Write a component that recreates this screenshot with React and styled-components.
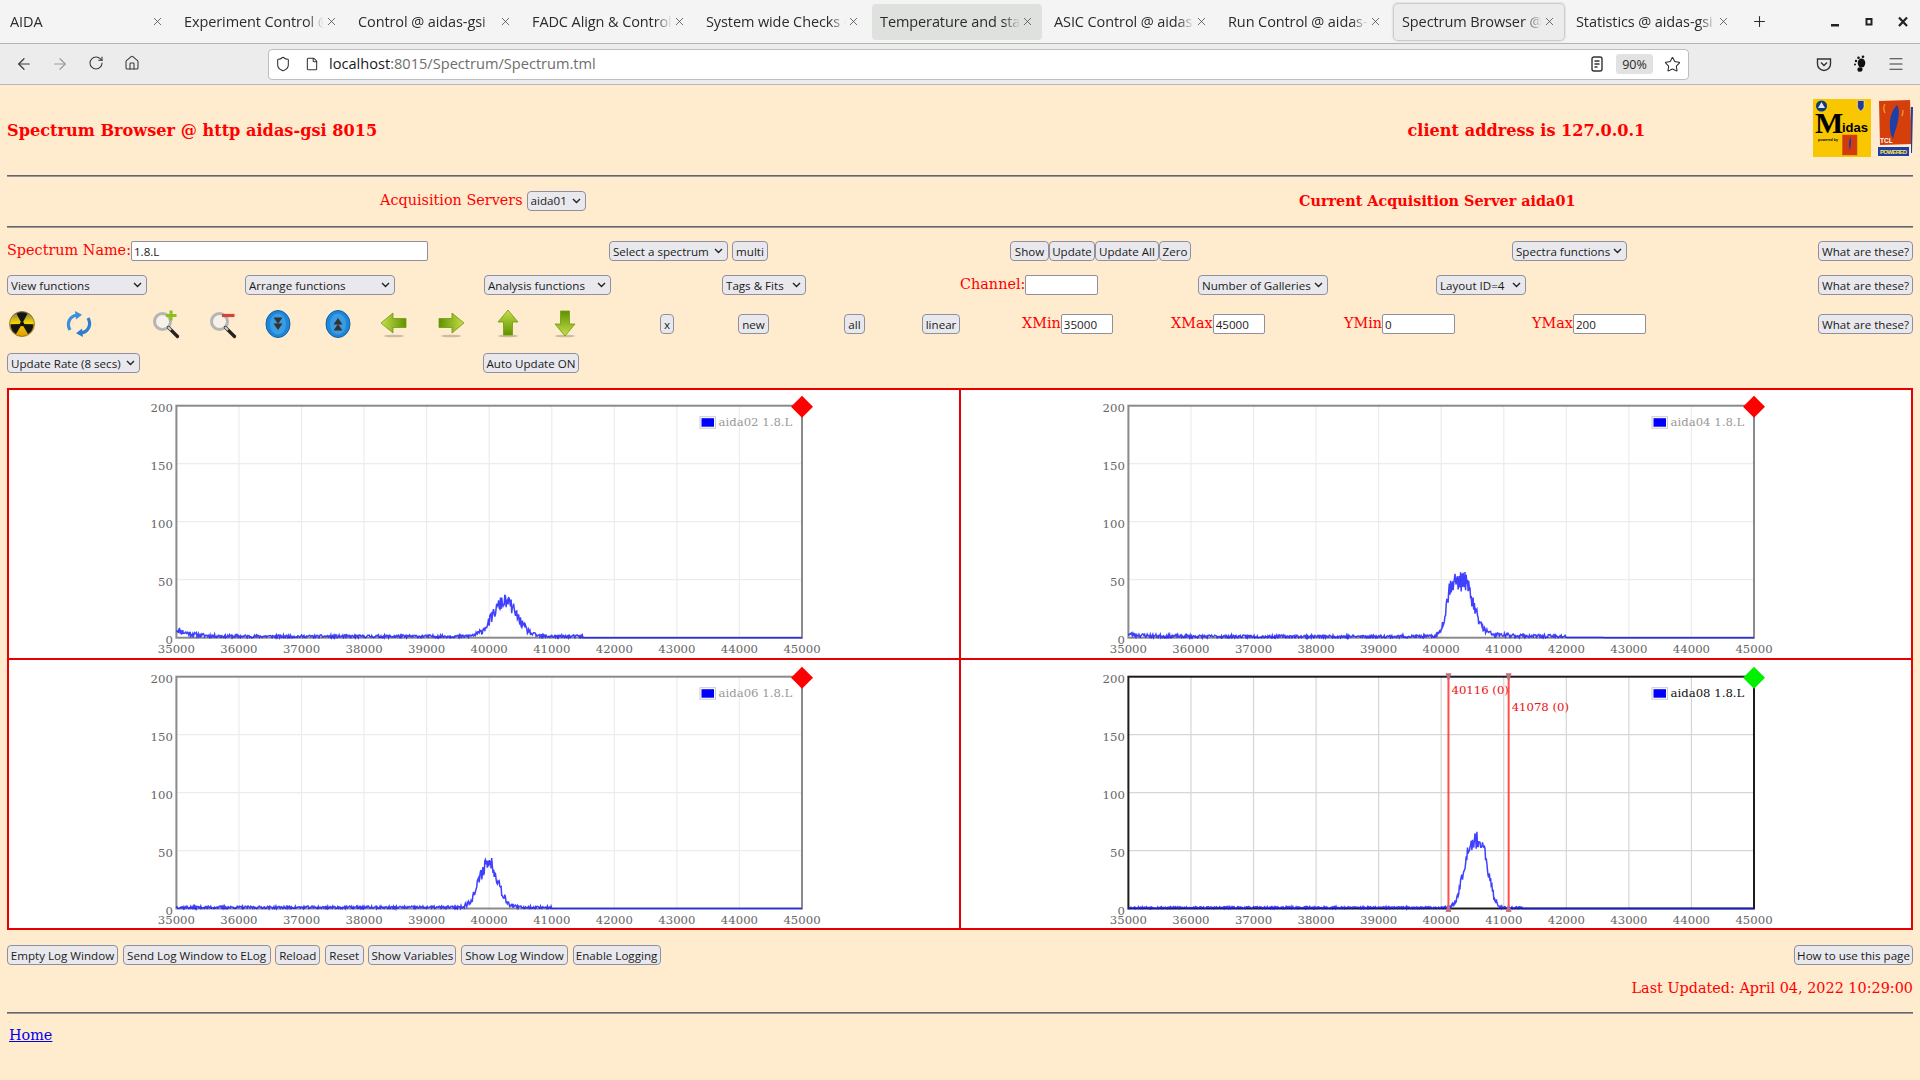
import React from 'react';
import styled, { createGlobalStyle } from 'styled-components';
import { X, ArrowLeft, ArrowRight, RotateCw, Home as HomeIcon, Plus, Star, Menu, Shield, File } from 'lucide-react';

const UI = '"Open Sans", "Noto Sans", sans-serif';
const SERIF = '"DejaVu Serif", serif';

const Global = createGlobalStyle`
  html, body { margin: 0; padding: 0; background: #ffebcd; }
  body { font-family: ${SERIF}; overflow: hidden; }
`;

const Chrome = styled.div`height: 85px; background: #ececec; font-family: ${UI}; color: #2b2b2b;`;
const TabBar = styled.div`height: 43px; background: #f4f4f4; border-bottom: 1px solid #b4b4b4; display: flex; align-items: center; padding-left: 2px; position: relative;`;
const Tab = styled.div`
  width: 170px; height: 36px; margin-right: 4px; box-sizing: border-box; border-radius: 4px;
  display: flex; align-items: center; padding: 0 8px; font-size: 14.5px;
  background: ${p => p.$state === 'active' ? '#ececec' : p.$state === 'hover' ? '#dfe1df' : 'transparent'};
  box-shadow: ${p => p.$state === 'active' ? '0 0 2px 1px #bdbdbd' : 'none'};
`;
const TabLabel = styled.span`
  flex: 1; white-space: nowrap; overflow: hidden; letter-spacing: -0.1px;
  -webkit-mask-image: linear-gradient(to right, #000 88%, transparent 100%);
  mask-image: linear-gradient(to right, #000 88%, transparent 100%);
`;
const TabClose = styled.span`display: flex; width: 14px; justify-content: center; color: #444;`;
const NewTab = styled.span`display: flex; margin-left: 6px; margin-right: 58px; width: 22px; justify-content: center;`;
const WinBtns = styled.div`display: flex; gap: 20px; align-items: center;`;
const NavBar = styled.div`height: 41px; border-bottom: 1px solid #b9b9b9; display: flex; align-items: center; position: relative; box-sizing: border-box;`;
const NavIcon = styled.span`display: flex; justify-content: center; width: 36px; color: ${p => p.$dim ? '#9c9c9c' : '#3a3a3a'};`;
const NavLeft = styled.div`display: flex; width: 268px; padding-left: 6px; box-sizing: border-box;`;
const UrlBar = styled.div`
  width: 1421px; height: 31px; box-sizing: border-box; background: #fff; border: 1px solid #bdbdbd; border-radius: 4px;
  display: flex; align-items: center; padding-left: 6px; font-size: 14.6px;
`;
const UrlIcon = styled.span`display: flex; justify-content: center; width: 16px; margin-right: ${p => p.$mr}px; color: #333;`;
const UrlHost = styled.span`color: #1a1a1a; position: relative; top: -1px;`;
const UrlRest = styled.span`color: #6d6d6d; flex: 1; position: relative; top: -1px;`;
const ZoomBadge = styled.span`width: 37px; height: 20px; background: #e2e2e2; border-radius: 3px; display: flex; align-items: center; justify-content: center; font-size: 12.5px; margin: 0 11px 0 12px;`;
const StarEnd = styled.span`display: flex; margin-right: 7px;`;
const NavRight = styled.div`display: flex; align-items: center; margin-left: 117px;`;

const Page = styled.div`padding: 0 7px; color: #f00; font-size: 14.4px;`;
const Header = styled.div`height: 90px; display: grid; grid-template-columns: 1400.5px 405px 1fr; align-items: center;`;
const Title = styled.div`font-weight: 700; font-size: 16.15px; white-space: nowrap;`;
const Logos = styled.div`display: flex; gap: 7px; margin-top: -4px;`;
const Rule = styled.hr`margin: 0; border: 0; height: 2px; background: linear-gradient(#666 0 50%, #999 50%);`;
const ServerRow = styled.div`height: 49px; box-sizing: border-box; padding: 0 0 2px 373px; display: grid; grid-template-columns: 919px 1fr; align-items: center; white-space: nowrap;`;
const Strong = styled.div`font-weight: 700; font-size: 14.4px; white-space: nowrap;`;
const Row = styled.div`
  display: grid; grid-template-columns: ${p => p.$cols}; grid-template-rows: 20px; height: 20px; align-items: center;
  margin-top: ${p => p.$top}px;
`;
const Field = styled.div`display: flex; align-items: center; white-space: nowrap; font-size: 14.4px; gap: ${p => p.$gap || 0}px;`;
const FieldText = styled.span`position: relative; top: -1px;`;

const control = `
  box-sizing: border-box; height: 20px; margin: 0; font-family: ${UI}; font-size: 11.6px; color: #1b1b1b;
  border: 1px solid #8f8f9d; background-color: #e9e9ed; border-radius: 4px; white-space: nowrap;
`;
const Btn = styled.button`${control} padding: 0; width: ${p => p.$w}px; text-align: center;`;
const chevron = `url("data:image/svg+xml,%3Csvg xmlns='http://www.w3.org/2000/svg' width='9' height='6'%3E%3Cpath d='M1 1l3.5 3.5L8 1' fill='none' stroke='%23222' stroke-width='1.4'/%3E%3C/svg%3E")`;
const Select = styled.select`
  ${control} padding: 0 0 0 3px; width: ${p => p.$w}px; appearance: none; -webkit-appearance: none;
  background-image: ${chevron}; background-repeat: no-repeat; background-position: right 4px center;
`;
const Input = styled.input`
  box-sizing: border-box; height: 20px; width: ${p => p.$w}px; margin: 0; padding: 0 2px; background: #fff;
  border: 1px solid #8f8f9d; border-radius: 2px; font-family: ${UI}; font-size: 11.6px; color: #1b1b1b;
`;
const IconSlot = styled.span`display: flex; width: 30px; height: 30px;`;
const PlotGrid = styled.div`
  margin-top: 15px; height: 542px; box-sizing: border-box; padding: 2px; background: #e80000;
  display: grid; grid-template-columns: 950px 950px; grid-template-rows: 268px 268px; gap: 2px;
`;
const PlotCell = styled.div`background: #fff;`;
const FootRow = styled.div`margin-top: 15px; height: 20px; display: flex; justify-content: space-between;`;
const FootLeft = styled.div`display: flex; gap: 4.6px;`;
const Updated = styled.div`text-align: right; margin-top: 13.500px; height: 18px; line-height: 18px; font-size: 14.4px;`;
const LastRule = styled(Rule)`margin-top: 15px;`;
const Dot = styled.div`height: 12px; padding-left: 2px; font-size: 5px; line-height: 12px; color: #555;`;
const HomeLink = styled.a`display: inline-block; margin-left: 2px; color: #00e; text-decoration: underline; font-size: 14.4px; line-height: 18px;`;

function rng(seed) { let s = seed; return () => { s = (s * 1664525 + 1013904223) % 4294967296; return s / 4294967296; }; }
const G = (c, m, w) => Math.exp(-Math.pow((c - m) / w, 2));

const specs = [
  { name: 'aida02', seed: 11, top: 15.7, bot: 247.7, n: 1.1, f: c => 6 * Math.exp(-(c - 35000) / 220) + (c < 41500 ? 1.2 : 0) + 30 * G(c, 40250, 270) },
  { name: 'aida04', seed: 23, top: 15.7, bot: 247.7, n: 1.2, f: c => 2 * Math.exp(-(c - 35000) / 300) + (c < 42000 ? 1.1 : 0) + (c < 40180 ? 47 * G(c, 40180, 130) : c < 40330 ? 47 : 47 * G(c, 40330, 230) + 4 * Math.exp(-(c - 40330) / 500)) },
  { name: 'aida06', seed: 37, top: 16.7, bot: 248.5, n: 1.1, f: c => (c < 41000 ? 1 : 0) + 39 * G(c, 39990, 210) },
  { name: 'aida08', seed: 53, top: 16.7, bot: 248.5, n: 1.0, active: true, f: c => (c < 41300 ? 0.8 : 0) + 58 * Math.exp(-Math.pow(Math.abs(c - 40550) / 240, 2.8)), marks: [40116, 41078] },
];

const PL = 167.4, PR = 793;
function Chart({ spec }) {
  const { top: T, bot: B, active } = spec;
  const sx = c => PL + (c - 35000) / 10000 * (PR - PL);
  const sy = v => B - v / 200 * (B - T);
  const rand = rng(spec.seed);
  const pts = [];
  for (let c = 35000; c <= 45000; c += 10) {
    const m = spec.f(c);
    const v = Math.max(0, m + (rand() - 0.5) * 2 * spec.n * (m > 0.2 ? Math.sqrt(m) : 0));
    pts.push(sx(c).toFixed(1) + ',' + sy(v).toFixed(1));
  }
  const frame = active ? '#1c1c1c' : '#8a8a8a';
  const grid = active ? '#d6d6d6' : '#ececec';
  const xt = []; for (let c = 35000; c <= 45000; c += 1000) xt.push(c);
  const yt = [0, 50, 100, 150, 200];
  return (
    <svg width="950" height="268" style={{ display: 'block' }} fontFamily={SERIF} fontSize="11.7">
      {xt.slice(1, -1).map(c => <line key={c} x1={sx(c)} x2={sx(c)} y1={T} y2={B} stroke={grid} strokeWidth="1.2" />)}
      {yt.slice(1, -1).map(v => <line key={v} y1={sy(v)} y2={sy(v)} x1={PL} x2={PR} stroke={grid} strokeWidth="1.2" />)}
      <rect x={PL} y={T} width={PR - PL} height={B - T} fill="none" stroke={frame} strokeWidth="2" />
      <polyline points={pts.join(' ')} fill="none" stroke="#1616ff" strokeOpacity=".82" strokeWidth="1.5" />
      {xt.map(c => <text key={c} x={sx(c)} y={B + 15.5} textAnchor="middle" fill="#666">{c}</text>)}
      {yt.map(v => <text key={v} x={PL - 3.5} y={sy(v) + 6} textAnchor="end" fill="#666">{v}</text>)}
      <rect x={PR - 102} y={T + 11} width="15.5" height="11.5" fill="#fff" stroke="#ccc" />
      <rect x={PR - 100.5} y={T + 12.5} width="12.5" height="8.5" fill="#00f" />
      <text x={PR - 83.5} y={T + 20.5} fill={active ? '#111' : '#999'}>{spec.name} 1.8.L</text>
      {(spec.marks || []).map((m, i) => (
        <g key={m}>
          <line x1={sx(m)} x2={sx(m)} y1={T} y2={B} stroke="#ff3b3b" strokeOpacity=".9" strokeWidth="2" />
          <path d={`M${sx(m) - 2.5} ${T - 3}h5l-2.5 7z`} fill="#7b8aa8" stroke="#f55" strokeWidth=".8" />
          <path d={`M${sx(m) - 2.5} ${B + 3}h5l-2.5 -7z`} fill="#7b8aa8" stroke="#f55" strokeWidth=".8" />
          <text x={sx(m) + 3} y={T + (i ? 34.5 : 17.5)} fill="#f01010">{m} (0)</text>
        </g>
      ))}
      <path d={`M${PR} ${T - 10}l11 11l-11 11l-11 -11z`} fill={active ? '#00f000' : '#f00'} />
    </svg>
  );
}

const Radiation = () => (
  <svg width="30" height="30" viewBox="0 0 30 30">
    <defs><linearGradient id="rad" x1="0" y1="0" x2="0" y2="1"><stop offset="0" stopColor="#7a7a5a" /><stop offset=".45" stopColor="#f5d400" /><stop offset="1" stopColor="#e09a00" /></linearGradient></defs>
    <circle cx="15" cy="15" r="12.5" fill="url(#rad)" stroke="#5a4a10" strokeWidth=".6" />
    <circle cx="15" cy="15" r="2.2" fill="#111" />
    <path d="M15 15 L9.5 4.8 A11.5 11.5 0 0 1 20.5 4.8Z M15 15 L26.5 15.2 A11.5 11.5 0 0 1 21 25 Z M15 15 L9 25 A11.5 11.5 0 0 1 3.5 15.2Z" fill="#151515" />
  </svg>
);
const Refresh = () => (
  <svg width="30" height="30" viewBox="0 0 30 30" fill="none">
    <path d="M6 21C2 14 6 7 13 6" stroke="#3c8fdc" strokeWidth="3.2" />
    <path d="M11 2l7 3.8-6 4.6z" fill="#3c8fdc" />
    <path d="M24 9c4 7 0 14-7 15" stroke="#2f7ed0" strokeWidth="3.2" />
    <path d="M19 28l-7-3.8 6-4.6z" fill="#2f7ed0" />
  </svg>
);
const Magnifier = ({ plus }) => (
  <svg width="30" height="30" viewBox="0 0 30 30">
    <circle cx="11.5" cy="12.5" r="8" fill="#f4f4f4" fillOpacity=".7" stroke="#b5b5b5" strokeWidth="3" />
    <path d="M17.5 18.5l9 9" stroke="#222" strokeWidth="3.2" strokeLinecap="round" />
    <path d="M17 18l3 3" stroke="#ccc" strokeWidth="2.2" />
    {plus ? <path d="M20 1.5v10M15 6.5h10.5" stroke="#8fbf1e" strokeWidth="3" /> : <path d="M14 6.5h12.5" stroke="#d9403a" strokeWidth="3.2" />}
  </svg>
);
const BlueRound = ({ up }) => (
  <svg width="30" height="30" viewBox="0 0 30 30">
    <ellipse cx="15" cy="15" rx="12" ry="13.5" fill="#1d86d8" stroke="#0e5fa8" />
    <ellipse cx="15" cy="15" rx="8" ry="10.5" fill="#62b8ee" fillOpacity=".45" />
    <g fill="#333" transform={up ? 'rotate(180 15 15)' : undefined}>
      <path d="M10.5 8.5h9L15 15z" /><path d="M10.5 14.5h9L15 21z" />
    </g>
  </svg>
);
const GreenArrow = ({ rot, id }) => (
  <svg width="30" height="30" viewBox="0 0 30 30">
    <defs><linearGradient id={id} x1="0" y1="0" x2="0" y2="1"><stop offset="0" stopColor="#c6df4a" /><stop offset="1" stopColor="#5f9200" /></linearGradient></defs>
    <ellipse cx="15" cy="27" rx="10" ry="1.3" fill="#000" fillOpacity=".2" />
    <g transform={rot === 'left' ? 'rotate(-90 15 14)' : rot === 'right' ? 'rotate(90 15 14)' : rot === 'down' ? 'rotate(180 15 14)' : undefined}>
      <path d="M15 1 L25 13 H19.500 V26 H10.500 V13 H5Z" fill={`url(#${id})`} stroke="#6f9a10" strokeWidth=".8" />
    </g>
  </svg>
);
const Midas = () => (
  <svg width="58" height="58" viewBox="0 0 58 58">
    <rect width="58" height="58" fill="#f8c700" />
    <circle cx="8.5" cy="7" r="5.5" fill="#123a7a" /><path d="M8.5 3l3.5 6h-7z" fill="#dfe6f0" />
    <path d="M44.5 1.5h6.5v6c0 2.5-3.2 4.5-3.2 4.5s-3.3-2-3.3-4.5z" fill="#2a3c90" stroke="#fff" strokeWidth=".5" />
    <text x="2" y="34" fontFamily='"Liberation Serif", serif' fontSize="30" fontWeight="700" fill="#000">M</text>
    <text x="29" y="33" fontFamily='"Liberation Sans", sans-serif' fontSize="13" fontWeight="700" fill="#000">idas</text>
    <text x="5" y="42" fontFamily='"Liberation Sans", sans-serif' fontSize="3.6" fontWeight="700" fill="#000">powered by</text>
    <rect x="29.5" y="36" width="14.5" height="20" fill="#d33a0c" stroke="#b52" strokeWidth=".5" />
    <path d="M37.5 38c-2 4-2 9-.8 13 1-3 2-9 .8-13z" fill="#1b3fa6" />
  </svg>
);
const Tcl = () => (
  <svg width="35" height="58" viewBox="0 0 35 58">
    <path d="M1 2 L32 1 L34 45 L2 46Z" fill="#d43f0b" />
    <path d="M33 8l2 0-1 46-1 0z" fill="#1b3fa6" />
    <path d="M19 6c-6 6-9 16-6 30 1 2 2 3 2.500 4 0-4 1-6 3-12 2-8 4-17 .5-22z" fill="#1e3fa8" />
    <path d="M7 5c-2 3-1 7 0 9M25 11c0 2 0 4-1 6" stroke="#f0a030" strokeWidth="1.200" fill="none" />
    <text x="2" y="44" fontFamily='"Liberation Sans", sans-serif' fontSize="6.5" fontWeight="700" fill="#fff">TCL</text>
    <rect x="0" y="48" width="31" height="9" fill="#1b3fa6" />
    <text x="2" y="55" fontFamily='"Liberation Sans", sans-serif' fontSize="6" fontWeight="700" fill="#ffe84a" textLength="27">POWERED</text>
  </svg>
);

const tabs = [
  ['AIDA'], ['Experiment Control @ aidas-gsi'], ['Control @ aidas-gsi'], ['FADC Align & Control @ aidas-gsi'],
  ['System wide Checks @ aidas-gsi'], ['Temperature and status @ aidas-gsi', 'hover'], ['ASIC Control @ aidas-gsi'],
  ['Run Control @ aidas-gsi'], ['Spectrum Browser @ aidas-gsi', 'active'], ['Statistics @ aidas-gsi'],
];

const R3 = '57px 87px 57px 55px 60px 56px 57px 57px 57px 110px 78px 106px 78px 100px 149px 173px 188px 286px 95px';

export default function App() {
  return (
    <>
      <Global />
      <Chrome>
        <TabBar>
          {tabs.map(([t, s]) => (
            <Tab key={t} $state={s}><TabLabel>{t}</TabLabel><TabClose><X size={13} strokeWidth={1.4} /></TabClose></Tab>
          ))}
          <NewTab><Plus size={17} strokeWidth={1.5} /></NewTab>
          <WinBtns>
            <svg width="14" height="14" viewBox="0 0 14 14"><rect x="3" y="9" width="8" height="2.5" fill="#222" /></svg>
            <svg width="14" height="14" viewBox="0 0 14 14"><rect x="4.500" y="4" width="5" height="5.500" fill="none" stroke="#222" strokeWidth="2" /></svg>
            <svg width="14" height="14" viewBox="0 0 14 14"><path d="M3 2.500l8 8.500M11 2.500L3 11" stroke="#222" strokeWidth="2.200" /></svg>
          </WinBtns>
        </TabBar>
        <NavBar>
          <NavLeft>
            <NavIcon><ArrowLeft size={18} strokeWidth={1.6} /></NavIcon>
            <NavIcon $dim><ArrowRight size={18} strokeWidth={1.6} /></NavIcon>
            <NavIcon><RotateCw size={16} strokeWidth={1.6} /></NavIcon>
            <NavIcon><HomeIcon size={16} strokeWidth={1.6} /></NavIcon>
          </NavLeft>
          <UrlBar>
            <UrlIcon $mr={13}><Shield size={16} strokeWidth={1.6} /></UrlIcon>
            <UrlIcon $mr={9}><File size={14} strokeWidth={1.8} /></UrlIcon>
            <UrlHost>localhost</UrlHost><UrlRest>:8015/Spectrum/Spectrum.tml</UrlRest>
            <svg width="14" height="16" viewBox="0 0 14 16" fill="none" stroke="#333" strokeWidth="1.4"><rect x="2" y="1" width="10" height="14" rx="2" /><path d="M4.500 5h5M4.500 8h5M4.500 11h3" /></svg>
            <ZoomBadge>90%</ZoomBadge>
            <StarEnd><Star size={17} strokeWidth={1.5} /></StarEnd>
          </UrlBar>
          <NavRight>
            <NavIcon><svg width="16" height="16" viewBox="0 0 16 16" fill="none" stroke="#333" strokeWidth="1.4"><path d="M1.500 3h13v5a6.500 6.500 0 0 1-13 0z" /><path d="M5 6.500L8 9.500l3-3" /></svg></NavIcon>
            <NavIcon><svg width="16" height="18" viewBox="0 0 16 18" fill="#111"><ellipse cx="9.500" cy="8" rx="3.800" ry="4.500" /><ellipse cx="8" cy="14.500" rx="2.600" ry="2.300" /><circle cx="4" cy="6" r="1.200" /><circle cx="6.500" cy="2.800" r="1.300" /><circle cx="11" cy="1.800" r="1.300" /><circle cx="3" cy="9.500" r="1" /></svg></NavIcon>
            <NavIcon><Menu size={18} strokeWidth={1.6} /></NavIcon>
          </NavRight>
        </NavBar>
      </Chrome>
      <Page>
        <Header>
          <Title>Spectrum Browser @ http aidas-gsi 8015</Title>
          <Title>client address is 127.0.0.1</Title>
          <Logos><Midas /><Tcl /></Logos>
        </Header>
        <Rule />
        <ServerRow>
          <Field $gap={4}><FieldText>Acquisition Servers</FieldText><Select $w={59} defaultValue="aida01"><option>aida01</option></Select></Field>
          <Strong>Current Acquisition Server aida01</Strong>
        </ServerRow>
        <Rule />
        <Row $top={13} $cols="602px 401px 502px 306px 95px">
          <Field><FieldText>Spectrum Name:</FieldText><Input $w={297} defaultValue="1.8.L" /></Field>
          <Field $gap={4}><Select $w={119}><option>Select a spectrum</option></Select><Btn $w={36}>multi</Btn></Field>
          <Field><Btn $w={39}>Show</Btn><Btn $w={46}>Update</Btn><Btn $w={64}>Update All</Btn><Btn $w={32}>Zero</Btn></Field>
          <Select $w={115}><option>Spectra functions</option></Select>
          <Btn $w={95}>What are these?</Btn>
        </Row>
        <Row $top={14} $cols="238px 239px 238px 238px 238px 238px 382px 95px">
          <Select $w={139.500}><option>View functions</option></Select>
          <Select $w={150}><option>Arrange functions</option></Select>
          <Select $w={127}><option>Analysis functions</option></Select>
          <Select $w={84}><option>Tags &amp; Fits</option></Select>
          <Field><FieldText>Channel:</FieldText><Input $w={73} /></Field>
          <Select $w={130}><option>Number of Galleries</option></Select>
          <Select $w={90}><option>Layout ID=4</option></Select>
          <Btn $w={95}>What are these?</Btn>
        </Row>
        <Row $top={19} $cols={R3}>
          <IconSlot><Radiation /></IconSlot>
          <IconSlot><Refresh /></IconSlot>
          <IconSlot><Magnifier plus /></IconSlot>
          <IconSlot><Magnifier /></IconSlot>
          <IconSlot><BlueRound /></IconSlot>
          <IconSlot><BlueRound up /></IconSlot>
          <IconSlot><GreenArrow rot="left" id="g1" /></IconSlot>
          <IconSlot><GreenArrow rot="right" id="g2" /></IconSlot>
          <IconSlot><GreenArrow rot="up" id="g3" /></IconSlot>
          <IconSlot><GreenArrow rot="down" id="g4" /></IconSlot>
          <Btn $w={14}>x</Btn>
          <Btn $w={31}>new</Btn>
          <Btn $w={21}>all</Btn>
          <Btn $w={38}>linear</Btn>
          <Field><FieldText>XMin</FieldText><Input $w={52} defaultValue="35000" /></Field>
          <Field><FieldText>XMax</FieldText><Input $w={52} defaultValue="45000" /></Field>
          <Field><FieldText>YMin</FieldText><Input $w={73} defaultValue="0" /></Field>
          <Field><FieldText>YMax</FieldText><Input $w={73} defaultValue="200" /></Field>
          <Btn $w={95}>What are these?</Btn>
        </Row>
        <Row $top={19} $cols="476px 1fr">
          <Select $w={133}><option>Update Rate (8 secs)</option></Select>
          <Btn $w={96}>Auto Update ON</Btn>
        </Row>
        <PlotGrid>
          {specs.map(s => <PlotCell key={s.name}><Chart spec={s} /></PlotCell>)}
        </PlotGrid>
        <FootRow>
          <FootLeft>
            <Btn $w={111}>Empty Log Window</Btn>
            <Btn $w={148}>Send Log Window to ELog</Btn>
            <Btn $w={45}>Reload</Btn>
            <Btn $w={39}>Reset</Btn>
            <Btn $w={88}>Show Variables</Btn>
            <Btn $w={107}>Show Log Window</Btn>
            <Btn $w={88}>Enable Logging</Btn>
          </FootLeft>
          <Btn $w={119}>How to use this page</Btn>
        </FootRow>
        <Updated>Last Updated: April 04, 2022 10:29:00</Updated>
        <LastRule />
        <Dot>.</Dot>
        <HomeLink href="#">Home</HomeLink>
      </Page>
    </>
  );
}
